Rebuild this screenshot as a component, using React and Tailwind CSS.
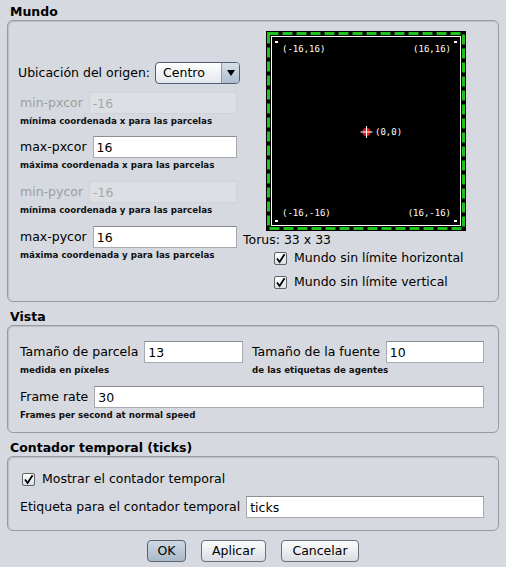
import React from 'react';

const Title = ({ children, className = '' }) => (
  <div className={`h-[16px] pl-[3px] font-bold leading-[16px] ${className}`}>{children}</div>
);

const Panel = ({ children, className = '' }) => (
  <div className={`rounded-[6px] border border-[#979aa0] shadow-[inset_1px_1px_1px_rgba(0,0,0,0.12)] ${className}`}>
    {children}
  </div>
);

const Caption = ({ children }) => (
  <div className="h-[15px] whitespace-nowrap text-[8.7px] font-bold leading-[15px] text-[#111]">{children}</div>
);

const Field = ({ value, disabled, className = '' }) => (
  <input
    readOnly
    value={value}
    disabled={disabled}
    className={`h-[22px] w-0 min-w-0 border pl-[3px] outline-none ${
      disabled
        ? 'border-[#cfd2d6] bg-[#dcdfe3] text-[#a4a7ab]'
        : 'border-[#a6a9ae] border-t-[#8b8e93] bg-white text-black'
    } ${className}`}
  />
);

const Check = () => (
  <span className="flex h-[13px] w-[13px] items-center justify-center rounded-[2px] border border-[#5d6168] bg-gradient-to-b from-white to-[#dce0e5]">
    <svg width="11" height="11" viewBox="0 0 11 11">
      <path d="M2 5.5 L4.6 9 L9.6 1.2" fill="none" stroke="#000" strokeWidth="1.8" />
    </svg>
  </span>
);

const Button = ({ children, primary, className = '' }) => (
  <button
    className={`h-[22px] rounded-[4px] border text-center leading-[20px] ${
      primary
        ? 'border-[#59616c] bg-gradient-to-b from-[#cfd9e5] to-[#a9b8ca]'
        : 'border-[#6b6f76] bg-gradient-to-b from-[#fbfcfd] to-[#dadde2]'
    } ${className}`}
  >
    {children}
  </button>
);

const WorldView = () => (
  <svg width="200" height="200" viewBox="0 0 200 200" className="ml-[23px] block">
    <rect x="0" y="0" width="200" height="200" fill="#000" />
    <rect x="2.5" y="2.5" width="195" height="195" fill="none" stroke="#1fc21a" strokeWidth="3" strokeDasharray="10 4" />
    <rect x="5.5" y="5.5" width="189" height="189" fill="none" stroke="#fff" strokeWidth="1" />
    <rect x="9" y="10" width="3" height="2" fill="#fff" />
    <rect x="188" y="10" width="3" height="2" fill="#fff" />
    <rect x="9" y="189" width="3" height="2" fill="#fff" />
    <rect x="188" y="189" width="3" height="2" fill="#fff" />
    <g fill="#fff" fontFamily="DejaVu Sans Mono, monospace" fontSize="9">
      <text x="16" y="21">(-16,16)</text>
      <text x="185" y="21" textAnchor="end">(16,16)</text>
      <text x="16" y="185">(-16,-16)</text>
      <text x="185" y="185" textAnchor="end">(16,-16)</text>
      <text x="109" y="104">(0,0)</text>
    </g>
    <circle cx="100.5" cy="101" r="4.2" fill="#e8191b" />
    <path d="M94.5 101 H106.5 M100.5 95 V107" stroke="#fff" strokeWidth="1" />
  </svg>
);

export default function App() {
  return (
    <div className="h-[567px] w-[506px] overflow-hidden bg-[#d6d9df] px-[7px] font-['DejaVu_Sans',sans-serif] text-[12.5px] leading-none text-black">
      <Title className="mt-[4px]">Mundo</Title>
      <Panel className="flex h-[282px] pl-[10px]">
        <div className="flex w-[222px] flex-col pt-[41px]">
          <div className="flex h-[22px] items-center gap-[5px]">
            <span className="whitespace-nowrap">Ubicación del origen:</span>
            <div className="flex h-[22px] w-[85px] overflow-hidden rounded-[4px] border border-[#4f5e74] bg-gradient-to-b from-white to-[#e3e7ec]">
              <span className="flex flex-1 items-center pl-[7px]">Centro</span>
              <span className="flex w-[18px] items-center justify-center border-l border-[#8d98a8] bg-gradient-to-b from-[#d9e1ea] to-[#aebccd]">
                <svg width="8" height="6" viewBox="0 0 8 6">
                  <path d="M0 0 H8 L4 6 Z" fill="#000" />
                </svg>
              </span>
            </div>
          </div>

          <div className="mt-[8px] pl-[2px] pr-[3px]">
            <div className="flex h-[22px] items-center gap-[6px]">
              <span className="text-[#9b9ea2]">min-pxcor</span>
              <Field value="-16" disabled className="flex-1" />
            </div>
            <Caption>mínima coordenada x para las parcelas</Caption>
          </div>
          <div className="mt-[7px] pl-[2px] pr-[3px]">
            <div className="flex h-[22px] items-center gap-[6px]">
              <span>max-pxcor</span>
              <Field value="16" className="flex-1" />
            </div>
            <Caption>máxima coordenada x para las parcelas</Caption>
          </div>
          <div className="mt-[8px] pl-[2px] pr-[3px]">
            <div className="flex h-[22px] items-center gap-[6px]">
              <span className="text-[#9b9ea2]">min-pycor</span>
              <Field value="-16" disabled className="flex-1" />
            </div>
            <Caption>mínima coordenada y para las parcelas</Caption>
          </div>
          <div className="mt-[8px] pl-[2px] pr-[3px]">
            <div className="flex h-[22px] items-center gap-[6px]">
              <span>max-pycor</span>
              <Field value="16" className="flex-1" />
            </div>
            <Caption>máxima coordenada y para las parcelas</Caption>
          </div>
        </div>

        <div className="ml-[3px] flex flex-col pt-[10px]">
          <WorldView />
          <div className="h-[17px] leading-[17px]">Torus: 33 x 33</div>
          <div className="ml-[31px] flex h-[20px] items-center gap-[7px]">
            <Check />
            <span>Mundo sin límite horizontal</span>
          </div>
          <div className="ml-[31px] mt-[4px] flex h-[20px] items-center gap-[7px]">
            <Check />
            <span>Mundo sin límite vertical</span>
          </div>
        </div>
      </Panel>

      <Title className="mt-[7px]">Vista</Title>
      <Panel className="h-[108px] pl-[12px] pr-[14px] pt-[15px]">
        <div className="flex">
          <div className="flex w-[223px] min-w-0 flex-col">
            <div className="flex h-[22px] items-center gap-[6px]">
              <span className="whitespace-nowrap">Tamaño de parcela</span>
              <Field value="13" className="flex-1" />
            </div>
            <Caption>medida en píxeles</Caption>
          </div>
          <div className="ml-[9px] flex min-w-0 flex-1 flex-col">
            <div className="flex h-[22px] items-center gap-[6px]">
              <span className="whitespace-nowrap">Tamaño de la fuente</span>
              <Field value="10" className="flex-1" />
            </div>
            <Caption>de las etiquetas de agentes</Caption>
          </div>
        </div>
        <div className="mt-[8px] flex h-[22px] items-center gap-[6px]">
          <span>Frame rate</span>
          <Field value="30" className="flex-1" />
        </div>
        <Caption>Frames per second at normal speed</Caption>
      </Panel>

      <Title className="mt-[7px]">Contador temporal (ticks)</Title>
      <Panel className="h-[75px] pl-[12px] pr-[14px] pt-[12px]">
        <div className="flex h-[20px] items-center gap-[7px] pl-[2px]">
          <Check />
          <span>Mostrar el contador temporal</span>
        </div>
        <div className="mt-[7px] flex h-[22px] items-center gap-[6px]">
          <span className="whitespace-nowrap">Etiqueta para el contador temporal</span>
          <Field value="ticks" className="flex-1" />
        </div>
      </Panel>

      <div className="mt-[9px] flex justify-center gap-[15px]">
        <Button primary className="w-[39px]">OK</Button>
        <Button className="w-[65px]">Aplicar</Button>
        <Button className="w-[78px]">Cancelar</Button>
      </div>
    </div>
  );
}
